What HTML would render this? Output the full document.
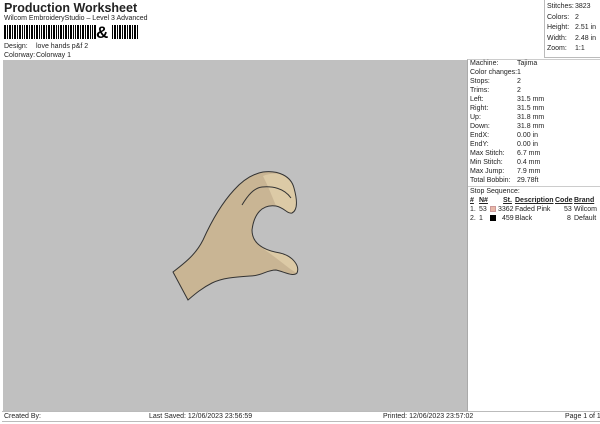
<!DOCTYPE html>
<html><head><meta charset="utf-8"><style>
*{margin:0;padding:0;box-sizing:border-box}
body{width:600px;height:424px;background:#fff;font-family:"Liberation Sans",sans-serif;color:#222;position:relative;overflow:hidden;font-size:7px}
.a{position:absolute;white-space:nowrap;line-height:9px}
</style></head><body>
<div class="a" style="left:4px;top:1px;font-size:12.5px;font-weight:bold;line-height:14px">Production Worksheet</div>
<div class="a" style="left:4px;top:14px;font-size:7px">Wilcom EmbroideryStudio – Level 3 Advanced</div>
<svg style="position:absolute;left:4px;top:25px" width="134" height="14">
<g fill="#000">
<rect x="0" y="0" width="2" height="14"/><rect x="3" y="0" width="1" height="14"/><rect x="5" y="0" width="2" height="14"/><rect x="8" y="0" width="1" height="14"/><rect x="10" y="0" width="2" height="14"/><rect x="13" y="0" width="1" height="14"/><rect x="15" y="0" width="2" height="14"/><rect x="18" y="0" width="1" height="14"/><rect x="20" y="0" width="1" height="14"/><rect x="22" y="0" width="2" height="14"/><rect x="25" y="0" width="1" height="14"/><rect x="27" y="0" width="2" height="14"/><rect x="30" y="0" width="1" height="14"/><rect x="32" y="0" width="2" height="14"/><rect x="35" y="0" width="1" height="14"/><rect x="37" y="0" width="1" height="14"/><rect x="39" y="0" width="2" height="14"/><rect x="42" y="0" width="1" height="14"/><rect x="44" y="0" width="2" height="14"/><rect x="47" y="0" width="1" height="14"/><rect x="49" y="0" width="2" height="14"/><rect x="52" y="0" width="1" height="14"/><rect x="54" y="0" width="1" height="14"/><rect x="56" y="0" width="2" height="14"/><rect x="59" y="0" width="1" height="14"/><rect x="61" y="0" width="2" height="14"/><rect x="64" y="0" width="1" height="14"/><rect x="66" y="0" width="2" height="14"/><rect x="69" y="0" width="1" height="14"/><rect x="71" y="0" width="1" height="14"/><rect x="73" y="0" width="2" height="14"/><rect x="76" y="0" width="1" height="14"/><rect x="78" y="0" width="2" height="14"/><rect x="81" y="0" width="1" height="14"/><rect x="83" y="0" width="2" height="14"/><rect x="86" y="0" width="1" height="14"/><rect x="88" y="0" width="1" height="14"/><rect x="90" y="0" width="2" height="14"/>
<rect x="108" y="0" width="1" height="14"/><rect x="110" y="0" width="2" height="14"/><rect x="113" y="0" width="1" height="14"/><rect x="115" y="0" width="2" height="14"/><rect x="118" y="0" width="1" height="14"/><rect x="120" y="0" width="2" height="14"/><rect x="123" y="0" width="1" height="14"/><rect x="125" y="0" width="2" height="14"/><rect x="128" y="0" width="1" height="14"/><rect x="130" y="0" width="2" height="14"/><rect x="133" y="0" width="1" height="14"/>
</g>
<text x="92" y="13" font-family="Liberation Sans" font-size="17" font-weight="bold">&amp;</text>
</svg>
<div class="a" style="left:4px;top:42px">Design:</div><div class="a" style="left:36px;top:42px">love hands p&amp;f 2</div>
<div class="a" style="left:4px;top:51px">Colorway:</div><div class="a" style="left:36px;top:51px">Colorway 1</div>

<div style="position:absolute;left:544px;top:0;width:56px;height:58px;border-left:1px solid #bbb;border-bottom:1px solid #bbb"></div>
<div class="a" style="left:547px;top:2px;line-height:10.5px">Stitches:<br>Colors:<br>Height:<br>Width:<br>Zoom:</div>
<div class="a" style="left:575px;top:2px;line-height:10.5px">3823<br>2<br>2.51 in<br>2.48 in<br>1:1</div>

<div style="position:absolute;left:3px;top:60px;width:464px;height:351px;background:#c0c0c0"></div>
<div style="position:absolute;left:467px;top:59px;width:133px;height:352px;border-left:1px solid #aaa;border-top:1px solid #ccc"></div>
<div style="position:absolute;left:468px;top:186px;width:132px;border-top:1px solid #ccc"></div>

<svg style="position:absolute;left:0;top:0" width="600" height="424">
<path d="M188,300 L173,272 C186,262 196,254 203,240 C212,220 222,203 234,190 C243,180 252,174 263,172 C278,170 291,176 294,188 C297,199 298,210 292,213 C287,214 285,208 276,206 C262,204 254,214 252,230 C252,243 262,250 280,253 C293,256 300,266 297,273 C293,277 285,272 276,270 C266,270 262,276 250,276 C235,277 222,278 212,283 C202,288 195,294 188,300 Z" fill="#c9b594"/>
<path d="M263,176 C278,170 291,176 294,188 C297,199 298,210 292,213 C287,214 285,208 276,206 C272,196 268,186 263,176 Z" fill="#dccaa6"/>
<path d="M262,248 C268,250 274,252 280,253 C293,256 300,266 297,273 C290,270 280,260 262,248 Z" fill="#dccaa6"/>
<path d="M188,300 L173,272 C186,262 196,254 203,240 C212,220 222,203 234,190 C243,180 252,174 263,172 C278,170 291,176 294,188 C297,199 298,210 292,213 C287,214 285,208 276,206 C262,204 254,214 252,230 C252,243 262,250 280,253 C293,256 300,266 297,273 C293,277 285,272 276,270 C266,270 262,276 250,276 C235,277 222,278 212,283 C202,288 195,294 188,300 Z" fill="none" stroke="#333" stroke-width="1"/>
<path d="M242,205 C248,195 254,188 262,187 C272,186 284,188 291,198" fill="none" stroke="#333" stroke-width="1"/>
</svg>

<div class="a" style="left:470px;top:59px">Machine:<br>Color changes:<br>Stops:<br>Trims:<br>Left:<br>Right:<br>Up:<br>Down:<br>EndX:<br>EndY:<br>Max Stitch:<br>Min Stitch:<br>Max Jump:<br>Total Bobbin:</div>
<div class="a" style="left:517px;top:59px">Tajima<br>1<br>2<br>2<br>31.5 mm<br>31.5 mm<br>31.8 mm<br>31.8 mm<br>0.00 in<br>0.00 in<br>6.7 mm<br>0.4 mm<br>7.9 mm<br>29.78ft</div>
<div class="a" style="left:470px;top:187px">Stop Sequence:</div>
<div class="a" style="left:470px;top:196px;font-weight:bold;text-decoration:underline">#</div>
<div class="a" style="left:479px;top:196px;font-weight:bold;text-decoration:underline">N#</div>
<div class="a" style="left:503px;top:196px;font-weight:bold;text-decoration:underline">St.</div>
<div class="a" style="left:515px;top:196px;font-weight:bold;text-decoration:underline">Description</div>
<div class="a" style="left:555px;top:196px;font-weight:bold;text-decoration:underline">Code</div>
<div class="a" style="left:574px;top:196px;font-weight:bold;text-decoration:underline">Brand</div>
<div class="a" style="left:470px;top:205px">1.</div><div class="a" style="left:479px;top:205px">53</div>
<div style="position:absolute;left:490px;top:206px;width:6px;height:6px;background:#e8b8a8;border:1px solid #c99"></div>
<div class="a" style="left:498px;top:205px">3362</div><div class="a" style="left:515px;top:205px">Faded Pink</div>
<div class="a" style="left:564px;top:205px">53</div><div class="a" style="left:574px;top:205px">Wilcom</div>
<div class="a" style="left:470px;top:214px">2.</div><div class="a" style="left:479px;top:214px">1</div>
<div style="position:absolute;left:490px;top:215px;width:6px;height:6px;background:#000"></div>
<div class="a" style="left:502px;top:214px">459</div><div class="a" style="left:515px;top:214px">Black</div>
<div class="a" style="left:567px;top:214px">8</div><div class="a" style="left:574px;top:214px">Default</div>

<div style="position:absolute;left:2px;top:411px;width:598px;height:11px;border-top:1px solid #bbb;border-bottom:1px solid #bbb"></div>
<div class="a" style="left:4px;top:412px">Created By:</div>
<div class="a" style="left:149px;top:412px">Last Saved: 12/06/2023 23:56:59</div>
<div class="a" style="left:383px;top:412px">Printed: 12/06/2023 23:57:02</div>
<div class="a" style="left:565px;top:412px">Page 1 of 1</div>
</body></html>
